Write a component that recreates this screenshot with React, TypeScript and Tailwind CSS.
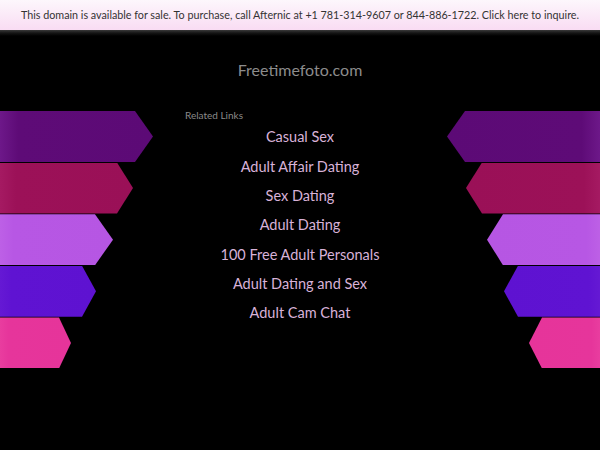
import React from "react";

const leftArrows = [
  { w: "w-[153px]", clip: "[clip-path:polygon(0_0,calc(100%_-_18px)_0,100%_50%,calc(100%_-_18px)_100%,0_100%)]", bg: "bg-[linear-gradient(90deg,#6d1889_0%,#5e0b77_12%,#5c0a76_100%)]" },
  { w: "w-[133px]", clip: "[clip-path:polygon(0_0,calc(100%_-_16px)_0,100%_50%,calc(100%_-_16px)_100%,0_100%)]", bg: "bg-[linear-gradient(90deg,#a51a62_0%,#9c1158_12%,#9a1057_100%)]" },
  { w: "w-[113px]", clip: "[clip-path:polygon(0_0,calc(100%_-_18px)_0,100%_50%,calc(100%_-_18px)_100%,0_100%)]", bg: "bg-[linear-gradient(90deg,#bd60e6_0%,#b757e4_12%,#b656e3_100%)]" },
  { w: "w-[96px]", clip: "[clip-path:polygon(0_0,calc(100%_-_14px)_0,100%_50%,calc(100%_-_14px)_100%,0_100%)]", bg: "bg-[linear-gradient(90deg,#6519d4_0%,#5f13d2_12%,#5e12d1_100%)]" },
  { w: "w-[71px]", clip: "[clip-path:polygon(0_0,calc(100%_-_12px)_0,100%_50%,calc(100%_-_12px)_100%,0_100%)]", bg: "bg-[linear-gradient(90deg,#e93d9f_0%,#e6359b_12%,#e6349a_100%)]" },
];

const rightArrows = [
  { w: "w-[153px]", clip: "[clip-path:polygon(18px_0,100%_0,100%_100%,18px_100%,0_50%)]", bg: "bg-[linear-gradient(270deg,#6d1889_0%,#5e0b77_12%,#5c0a76_100%)]" },
  { w: "w-[134px]", clip: "[clip-path:polygon(16px_0,100%_0,100%_100%,16px_100%,0_50%)]", bg: "bg-[linear-gradient(270deg,#a51a62_0%,#9c1158_12%,#9a1057_100%)]" },
  { w: "w-[113px]", clip: "[clip-path:polygon(16px_0,100%_0,100%_100%,16px_100%,0_50%)]", bg: "bg-[linear-gradient(270deg,#bd60e6_0%,#b757e4_12%,#b656e3_100%)]" },
  { w: "w-[96px]", clip: "[clip-path:polygon(14px_0,100%_0,100%_100%,14px_100%,0_50%)]", bg: "bg-[linear-gradient(270deg,#6519d4_0%,#5f13d2_12%,#5e12d1_100%)]" },
  { w: "w-[71px]", clip: "[clip-path:polygon(13px_0,100%_0,100%_100%,13px_100%,0_50%)]", bg: "bg-[linear-gradient(270deg,#e93d9f_0%,#e6359b_12%,#e6349a_100%)]" },
];

const links = [
  "Casual Sex",
  "Adult Affair Dating",
  "Sex Dating",
  "Adult Dating",
  "100 Free Adult Personals",
  "Adult Dating and Sex",
  "Adult Cam Chat",
];

export default function App() {
  return (
    <div className="w-[600px] h-[450px] bg-black overflow-hidden font-['Lato','Noto_Sans',sans-serif]">
      <div className="h-[30px] flex items-center justify-center whitespace-nowrap bg-[linear-gradient(180deg,#fdf7fc_0%,#f9dcf3_100%)] text-[#333333] text-[10.75px]">
        This domain is available for sale. To purchase, call Afternic at +1 781-314-9607 or 844-886-1722. Click here to inquire.
      </div>
      <div className="h-[6px] bg-[linear-gradient(180deg,#3a3a3a_0%,#151515_50%,#000000_100%)]" />
      <div className="h-[24px]" />
      <div className="h-[20px] flex items-center justify-center text-[#8c8c8c] text-[16px]">
        Freetimefoto.com
      </div>
      <div className="h-[31px]" />
      <div className="flex">
        <div className="w-[153px] flex flex-col gap-[0.6px]">
          {leftArrows.map((a, i) => (
            <div key={i} className={`h-[51px] ${a.w} ${a.clip} ${a.bg}`} />
          ))}
        </div>
        <div className="flex-1 flex flex-col">
          <div className="pl-[32px] h-[8px] flex items-center text-[10px] text-[#8a8a8a] leading-none">
            Related Links
          </div>
          <div className="flex flex-col items-center mt-[4px]">
            {links.map((l) => (
              <div key={l} className="h-[29.3px] flex items-center text-[14.5px] text-[#d8b2d8] leading-none">
                {l}
              </div>
            ))}
          </div>
        </div>
        <div className="w-[153px] flex flex-col items-end gap-[0.6px]">
          {rightArrows.map((a, i) => (
            <div key={i} className={`h-[51px] ${a.w} ${a.clip} ${a.bg}`} />
          ))}
        </div>
      </div>
    </div>
  );
}
